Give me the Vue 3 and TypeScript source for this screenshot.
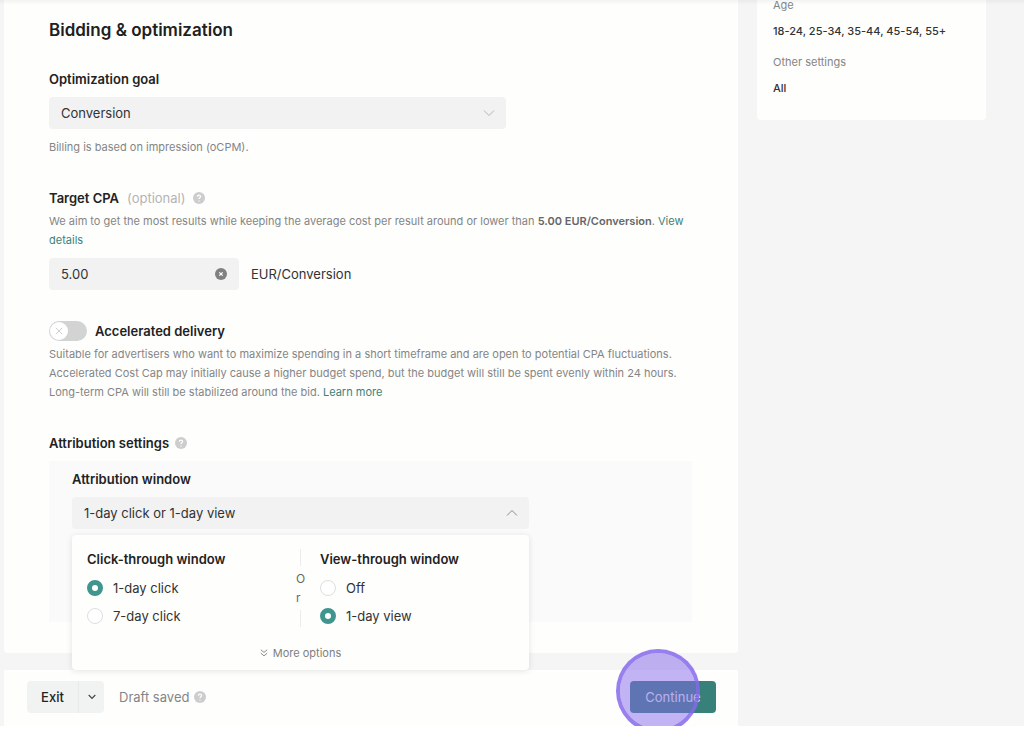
<script setup lang="ts">
import { ref } from 'vue'

const goal = ref('Conversion')
const target = ref('5.00')
const accelerated = ref(false)
const click = ref('1-day click')
const view = ref('1-day view')
const open = ref(true)

const clickOptions: string[] = ['1-day click', '7-day click']
const viewOptions: string[] = ['Off', '1-day view']
</script>

<template>
  <div class="page">
    <div class="columns">
      <main class="card">
        <h1>Bidding &amp; optimization</h1>

        <label class="label" for="goal">Optimization goal</label>
        <div class="field wide">
          <select id="goal" v-model="goal">
            <option>Conversion</option>
            <option>Click</option>
          </select>
          <svg class="chevron light" viewBox="0 0 12 8"><path d="M1 1.5 6 6.5 11 1.5" /></svg>
        </div>
        <p class="hint billing">Billing is based on impression (oCPM).</p>

        <div class="row">
          <label class="label" for="cpa">Target CPA</label>
          <span class="optional">(optional)</span>
          <svg class="help" viewBox="0 0 12 12" aria-hidden="true">
            <circle cx="6" cy="6" r="6" />
            <path d="M4.4 4.8c0-2.2 3.2-2.1 3.2-.2C7.6 5.8 6 5.7 6 7.1" />
            <path d="M6 8.4v1" />
          </svg>
        </div>
        <p class="hint target">
          We aim to get the most results while keeping the average cost per result around or lower than
          <b>5.00 EUR/Conversion</b>. <a href="#">View details</a>
        </p>
        <div class="amount">
          <div class="field short">
            <input id="cpa" v-model="target" type="text" />
            <button class="clear" type="button" aria-label="Clear" @click="target = ''">
              <svg viewBox="0 0 12 12"><circle cx="6" cy="6" r="6" /><path d="M4.3 4.3 7.7 7.7M7.7 4.3 4.3 7.7" /></svg>
            </button>
          </div>
          <span>EUR/Conversion</span>
        </div>

        <label class="switch-row">
          <span class="switch" :class="{ on: accelerated }">
            <input v-model="accelerated" type="checkbox" />
            <span class="knob"><svg viewBox="0 0 8 8"><path d="M.8.8 7.2 7.2M7.2.8.8 7.2" /></svg></span>
          </span>
          <span class="label">Accelerated delivery</span>
        </label>
        <p class="hint accelerated">
          Suitable for advertisers who want to maximize spending in a short timeframe and are open to potential CPA
          fluctuations. Accelerated Cost Cap may initially cause a higher budget spend, but the budget will still be
          spent evenly within 24 hours. Long-term CPA will still be stabilized around the bid. <a href="#">Learn more</a>
        </p>

        <div class="row settings">
          <h2 class="label">Attribution settings</h2>
          <svg class="help" viewBox="0 0 12 12" aria-hidden="true">
            <circle cx="6" cy="6" r="6" />
            <path d="M4.4 4.8c0-2.2 3.2-2.1 3.2-.2C7.6 5.8 6 5.7 6 7.1" />
            <path d="M6 8.4v1" />
          </svg>
        </div>
        <section class="panel">
          <h3 id="window-label" class="label">Attribution window</h3>
          <div class="dropdown">
            <button
              class="field trigger"
              type="button"
              aria-labelledby="window-label"
              :aria-expanded="open"
              @click="open = !open"
            >
              {{ click }} or {{ view }}
              <svg class="chevron" viewBox="0 0 12 8"><path d="M1 6.5 6 1.5 11 6.5" /></svg>
            </button>
            <div v-if="open" class="popover">
              <div class="choices">
                <fieldset>
                  <legend class="label">Click-through window</legend>
                  <label v-for="o in clickOptions" :key="o" class="radio">
                    <input v-model="click" type="radio" name="click" :value="o" />{{ o }}
                  </label>
                </fieldset>
                <div class="or"><i></i><span>Or</span><i></i></div>
                <fieldset>
                  <legend class="label">View-through window</legend>
                  <label v-for="o in viewOptions" :key="o" class="radio">
                    <input v-model="view" type="radio" name="view" :value="o" />{{ o }}
                  </label>
                </fieldset>
              </div>
              <button class="more" type="button">
                <svg viewBox="0 0 8 8"><path d="M.8.8 4 3.4 7.2.8M.8 4.2 4 6.8 7.2 4.2" /></svg>More options
              </button>
            </div>
          </div>
        </section>
      </main>

      <aside class="summary">
        <dl>
          <dt>Age</dt>
          <dd>18-24, 25-34, 35-44, 45-54, 55+</dd>
          <dt>Other settings</dt>
          <dd>All</dd>
        </dl>
      </aside>

      <footer class="bar">
        <div class="exit">
          <button type="button">Exit</button>
          <button class="caret" type="button" aria-label="More exit options">
            <svg viewBox="0 0 8 6"><path d="M.7 1 4 4.5 7.3 1" /></svg>
          </button>
        </div>
        <span class="draft">Draft saved</span>
        <svg class="help" viewBox="0 0 12 12" aria-hidden="true">
          <circle cx="6" cy="6" r="6" />
          <path d="M4.4 4.8c0-2.2 3.2-2.1 3.2-.2C7.6 5.8 6 5.7 6 7.1" />
          <path d="M6 8.4v1" />
        </svg>
        <div class="continue">
          <button type="button">Continue</button>
          <span class="spot"></span>
        </div>
      </footer>
    </div>
  </div>
</template>

<style>
body {
  margin: 0;
  background: #fff;
}
</style>

<style scoped>
.page {
  position: relative;
  overflow: hidden;
  background: #f5f5f5;
  color: #333;
  font: 13px/20px Inter, "Liberation Sans", sans-serif;
}
.page::before {
  content: "";
  position: absolute;
  inset: 0 0 auto;
  z-index: 1;
  height: 5px;
  background: linear-gradient(#0000000b, #0000);
}
* {
  box-sizing: border-box;
}
h1, h2, h3, p, dl, dd {
  margin: 0;
}
button, input, select {
  font: inherit;
  color: inherit;
}
button {
  padding: 0;
  border: 0;
  background: none;
}
svg {
  display: block;
  flex: none;
  fill: none;
}
a {
  color: #3b827c;
  text-decoration: none;
}
.columns {
  display: grid;
  grid-template-columns: minmax(0, 1fr) 229px;
  column-gap: 19px;
  row-gap: 17px;
  align-items: start;
  padding: 0 38px 0 4px;
}
.card {
  padding: 18px 46px 31px 45px;
  border-radius: 0 0 4px 4px;
  background: #fefefd;
}
h1 {
  margin-bottom: 27px;
  color: #202020;
  font-size: 17px;
  font-weight: 600;
  line-height: 24px;
}
.label {
  display: block;
  padding: 0;
  color: #222;
  font-size: 13px;
  font-weight: 600;
  line-height: 20px;
}
.field {
  display: flex;
  align-items: center;
  position: relative;
  height: 32px;
  border-radius: 4px;
  background: #f1f2f1;
}
.wide, .dropdown {
  max-width: 457px;
}
.wide {
  margin-top: 8px;
}
.field select, .field input {
  width: 100%;
  height: 100%;
  padding: 0 12px;
  border: 0;
  outline: 0;
  appearance: none;
  background: none;
}
.chevron {
  position: absolute;
  right: 11px;
  width: 12px;
  height: 8px;
  stroke: #8a8a8a;
  pointer-events: none;
}
.light {
  stroke: #b5b5b5;
}
.hint {
  color: #858585;
  font-size: 11px;
  line-height: 19px;
}
.billing {
  margin: 9px 0 31px;
}
.row {
  display: flex;
  align-items: center;
}
.optional {
  margin: 0 8px;
  color: #b4b4b4;
}
.help {
  width: 12px;
  height: 12px;
}
.help circle {
  fill: #cdcdcd;
}
.help path {
  stroke: #fff;
  stroke-width: 1.2;
}
.target {
  margin: 4px 0 8px;
}
.target b {
  color: #666;
  font-weight: 600;
}
.amount {
  display: flex;
  align-items: center;
  gap: 12px;
}
.short {
  width: 190px;
}
.clear {
  position: absolute;
  right: 12px;
}
.clear svg {
  width: 12px;
  height: 12px;
}
.clear circle {
  fill: #808080;
}
.clear path {
  stroke: #fff;
  stroke-width: 1.2;
}
.switch-row {
  display: flex;
  align-items: center;
  gap: 8px;
  height: 22px;
  margin: 30px 0 3px;
}
.switch {
  display: flex;
  position: relative;
  width: 38px;
  height: 20px;
  padding: 1px;
  border-radius: 10px;
  background: #d2d3d3;
}
.switch.on {
  justify-content: flex-end;
  background: #40958f;
}
.switch input {
  position: absolute;
  inset: 0;
  margin: 0;
  opacity: 0;
}
.knob {
  display: grid;
  place-items: center;
  width: 18px;
  height: 18px;
  border-radius: 50%;
  background: #fff;
}
.knob svg {
  width: 8px;
  height: 8px;
  stroke: #cfcfcf;
}
.settings {
  gap: 6px;
  margin: 31px 0 8px;
}
.panel {
  padding: 8px 23px 93px;
  background: #fafafa;
}
.dropdown {
  position: relative;
  margin-top: 8px;
}
.trigger {
  width: 100%;
  padding: 0 12px;
}
.popover {
  position: absolute;
  z-index: 2;
  top: 38px;
  left: 0;
  right: 0;
  padding: 14px 15px 7px;
  border-radius: 4px;
  background: #fefefd;
  box-shadow: 0 1px 6px #0000001c;
}
.choices {
  display: grid;
  grid-template-columns: 209px 8px 1fr;
}
fieldset {
  min-width: 0;
  margin: 0;
  padding: 0;
  border: 0;
}
fieldset .label {
  margin-bottom: 5px;
}
.choices > :last-child {
  margin-left: 16px;
}
.radio {
  display: flex;
  align-items: center;
  gap: 10px;
  height: 28px;
}
.radio input {
  width: 16px;
  height: 16px;
  margin: 0;
  border: 1px solid #dedede;
  border-radius: 50%;
  appearance: none;
  background: #fff;
}
.radio input:checked {
  border: 5px solid #40958f;
}
.or {
  display: flex;
  flex-direction: column;
  align-items: center;
  height: 78px;
  color: #666;
  font-size: 12px;
  line-height: 19px;
}
.or i {
  flex: 1;
  width: 1px;
  background: #ececec;
}
.or span {
  width: 8px;
  margin: 3px 0;
  word-break: break-all;
}
.more {
  display: flex;
  align-items: center;
  gap: 5px;
  margin: 13px auto 0;
  color: #808080;
  font-size: 11px;
  line-height: 20px;
}
.more svg {
  width: 8px;
  height: 8px;
  stroke: #8a8a8a;
}
.summary {
  padding: 0 16px 11px;
  border-radius: 0 0 4px 4px;
  background: #fefefd;
  font-size: 11px;
  line-height: 20px;
}
.summary dl {
  margin-top: -5px;
}
.summary dt {
  color: #858585;
}
.summary dd {
  margin: 6px 0 11px;
  color: #333;
  font-weight: 500;
}
.bar {
  display: flex;
  align-items: center;
  padding: 11px 22px 13px 23px;
  background: #fefefd;
}
.exit {
  display: flex;
  overflow: hidden;
  height: 32px;
  margin-right: 15px;
  border-radius: 4px;
  background: #f1f2f2;
  color: #222;
  font-weight: 500;
}
.exit button:first-child {
  width: 51px;
}
.caret {
  display: grid;
  place-items: center;
  width: 26px;
  border-left: 1px solid #e8e9e9;
}
.caret svg {
  width: 8px;
  height: 6px;
  stroke: #444;
  stroke-width: 1.2;
}
.draft {
  margin-right: 5px;
  color: #858585;
}
.continue {
  position: relative;
  margin-left: auto;
}
.continue button {
  width: 86px;
  height: 32px;
  border-radius: 4px;
  background: #38807a;
  color: #eef5f4;
}
.spot {
  position: absolute;
  top: -32px;
  left: -14px;
  width: 84px;
  height: 84px;
  border: 4px solid #8668ecd9;
  border-radius: 50%;
  background: #8567ec80;
  background-clip: padding-box;
  pointer-events: none;
}
</style>
